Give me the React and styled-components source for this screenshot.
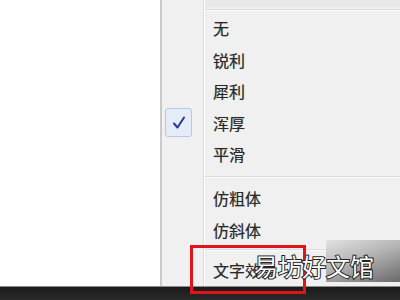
import React from "react";
import styled, { createGlobalStyle } from "styled-components";

const Global = createGlobalStyle`
  html, body { margin: 0; padding: 0; background: #ffffff; overflow: hidden; }
  body { width: 400px; height: 300px; font-family: "Noto Sans CJK SC", "Noto Sans", sans-serif; }
`;

const Screen = styled.div`
  position: relative;
  width: 400px;
  height: 300px;
  display: flex;
  flex-direction: column;
  overflow: hidden;
`;

const Desktop = styled.div`
  flex: 0 0 282px;
  display: flex;
  background: #ffffff;
`;

const Blank = styled.div`
  flex: 0 0 160px;
  background: #ffffff;
`;

const Menu = styled.div`
  flex: 1;
  display: flex;
  border-left: 2px solid #cacaca;
  background: #f0f0f0;
`;

const Gutter = styled.div`
  flex: 0 0 41px;
  border-right: 1px solid #dedede;
  box-shadow: 1px 0 0 #fbfbfb;
  display: flex;
  flex-direction: column;
`;

const Body = styled.div`
  flex: 1;
  display: flex;
  flex-direction: column;
  padding-left: 1px;
`;

const TopBand = styled.div`
  height: 7px;
  background: ${p => (p.$plain ? "#f0f0f0" : "#e9e9e9")};
`;

const Sep = styled.div`
  height: ${p => p.$h}px;
  display: flex;
  align-items: center;
  box-sizing: border-box;
  &::after {
    content: "";
    flex: 1;
    height: 1px;
    background: ${p => (p.$blank ? "transparent" : "#dcdcdc")};
    box-shadow: ${p => (p.$blank ? "none" : "0 1px 0 #fafafa")};
  }
`;

const Item = styled.div`
  height: 31.5px;
  display: flex;
  align-items: center;
  padding-left: 8px;
  font-size: 16px;
  color: #2a2a2a;
  text-shadow: 0 0 0.7px rgba(0,0,0,0.4);
`;

const GutterCell = styled.div`
  height: 31.5px;
  display: flex;
  align-items: center;
  padding-left: 3px;
`;

const CheckBox = styled.div`
  width: 25px;
  height: 27px;
  border: 1px solid #b3c9e6;
  border-radius: 3px;
  background: #e3ecf8;
  display: flex;
  align-items: center;
  justify-content: center;
`;

const Taskbar = styled.div`
  flex: 1;
  border-top: 1px solid #8a8a8a;
  background: linear-gradient(#1a1a1a, #2a2a2a);
`;

const Highlight = styled.div`
  position: absolute;
  left: 190px;
  top: 245px;
  width: 116px;
  height: 49px;
  box-sizing: border-box;
  border: 3px solid #e0141a;
`;

const Blur = styled.div`
  position: absolute;
  left: 326px;
  top: 240px;
  width: 74px;
  height: 42px;
  background: linear-gradient(160deg, #e2e2e2 0%, #b4b4b4 45%, #6a6a6a 100%);
`;

const Watermark = styled.div`
  position: absolute;
  left: 254px;
  top: 250px;
  font-size: 24px;
  line-height: 32px;
  color: #ffffff;
  white-space: nowrap;
  -webkit-text-stroke: 2px #222222;
  paint-order: stroke fill;
  font-family: "Noto Sans CJK SC", sans-serif;
`;

const Check = () => (
  <svg width="16" height="16" viewBox="0 0 16 16">
    <path d="M3 8.5 L6.5 12.5 L13 2.5" fill="none" stroke="#2b3990" strokeWidth="2" strokeLinejoin="round" strokeLinecap="round" />
  </svg>
);

const groupA = ["无", "锐利", "犀利", "浑厚", "平滑"];
const groupB = ["仿粗体", "仿斜体"];

export default function App() {
  return (
    <>
      <Global />
      <Screen>
        <Desktop>
          <Blank />
          <Menu>
            <Gutter>
              <TopBand $plain />
              <Sep $h={5.25} $blank />
              {groupA.map((t, i) => (
                <GutterCell key={t}>{i === 3 && <CheckBox><Check /></CheckBox>}</GutterCell>
              ))}
            </Gutter>
            <Body>
              <TopBand />
              <Sep $h={5.25} />
              {groupA.map(t => <Item key={t}>{t}</Item>)}
              <Sep $h={12.5} />
              {groupB.map(t => <Item key={t}>{t}</Item>)}
              <Sep $h={9} />
              <Item>文字效果</Item>
            </Body>
          </Menu>
        </Desktop>
        <Taskbar />
        <Blur />
        <Highlight />
        <Watermark>易坊好文馆</Watermark>
      </Screen>
    </>
  );
}
